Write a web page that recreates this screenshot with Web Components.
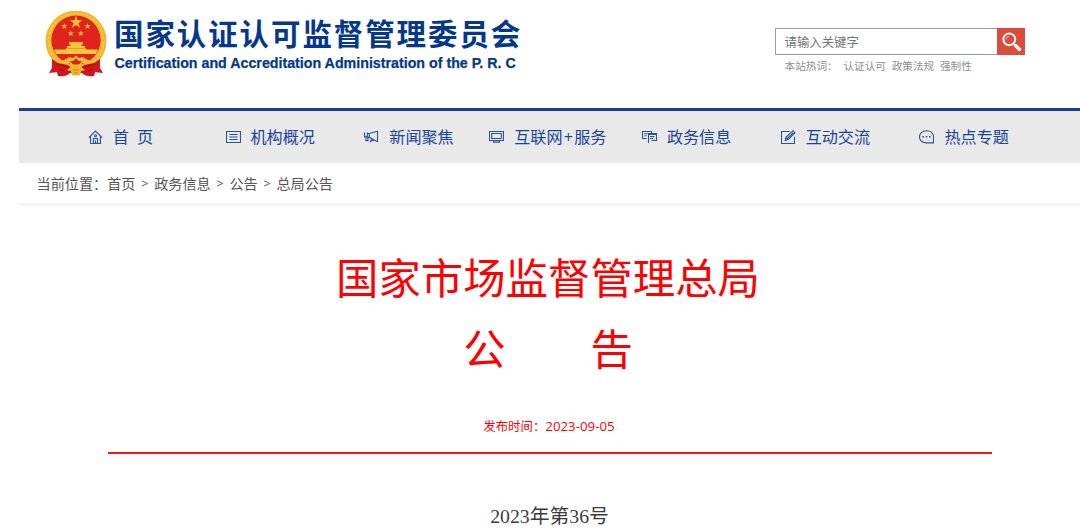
<!DOCTYPE html>
<html lang="zh-CN">
<head>
<meta charset="utf-8">
<title>国家认证认可监督管理委员会</title>
<style>
    body {
        margin: 0;
        background-color: #fff;
        overflow: hidden;
        font-family: "Open Sans", "Noto Sans CJK SC", sans-serif;
    }
</style>
</head>
<body>
<cnca-page></cnca-page>

<script>
const ICONS = {
    home: `<path d="M.8 7.6 7.5 1l6.7 6.6M2.6 6.4v7.1h9.8V6.4M5.5 13V8.5h4V13M7.5 10.5V13"/><circle cx="7.5" cy="5.7" r="1"/>`,
    list: `<path d="M.5 1.5h14v11H.5zM3.4 4.5h8.2M3.4 7h8.2M3.4 9.5h8.2"/>`,
    horn: `<path d="M.5 2.5v4.4h2.8V2.5M5.3 3v4.6M3.3 3.5h2l8.2-2.2v10.4L5.3 7.4h-2M2 7v3.6h2V7M8 9 6.5 11.5l3.6-1.4"/>`,
    screen: `<path d="M.5 1.5h14v9H.5zM2.7 3.5h9.6v5H2.7zM4.5 10.5v1.6h6v-1.6"/>`,
    boards: `<path d="M4.5 8.5h-4v-7h9v1.6M2.4 3.7h3M2.4 5.8h2M9.5 10.5h5v-6h-8v8M5.6 3.5h8.9v1.2M8 6.5h4.4M8 8.5h3M6.5 8.6V13"/>`,
    edit: `<path d="M8.6 1.5H.5v12h13V6.8M4.2 10.4l.7-3L12 .7l2 2-6.8 6.9zM4.9 7.4l2.1 2.2M6.5 8.4l5.8-5.8"/>`,
    chat: `<path d="M14.5 12.9H7.5C3.2 12.9.5 10.4.5 6.9S3.2.8 7.5.8s7 2.5 7 6.1z"/><path d="M3.4 6.7h1.6M6.7 6.7h1.6M10 6.7h1.6" stroke-width="1.6"/>`
};

class NationalEmblem extends HTMLElement {

    constructor() {
        super();
        this.shadowDOM = this.attachShadow({mode: "open"});
    }

    connectedCallback() {
        this.shadowDOM.innerHTML = `
        <style>
            :host { display: block; width: 62px; height: 67px; }
            svg { display: block; }
        </style>
        <svg width="62" height="67" viewBox="0 0 62 67">
            <path d="M8 50 Q15 53 22 53H40Q47 53 54 50L55 60 50 61 49 65 Q41 66 37 62H25Q21 66 13 65L12 61 7 60z" fill="#c9151b"/>
            <circle cx="31" cy="30" r="30.5" fill="#efb732"/>
            <circle cx="31" cy="30" r="27.5" fill="none" stroke="#f4c544" stroke-width="2" stroke-dasharray="3 1.2"/>
            <circle cx="31" cy="29.2" r="24.6" fill="#e0231c"/>
            <g fill="#f8c63b">
                <path id="star" d="M31 4.5 32.5 9.2H37.4L33.5 12 35 16.8 31 13.9 27 16.8 28.5 12 24.6 9.2H29.5z"/>
                <use href="#star" transform="translate(4.4 9.9) scale(.48)"/>
                <use href="#star" transform="translate(27.7 9.9) scale(.48)"/>
                <use href="#star" transform="translate(11 17) scale(.48)"/>
                <use href="#star" transform="translate(21 17) scale(.48)"/>
                <path d="M24 31h14v2.5h-1.5v1.5H40v2h1v6H21v-6h1v-2h3.5v-1.5H24z"/>
                <path d="M9 38.5h44l-2 4.5H11z"/>
            </g>
            <path d="M22 37.5h18" stroke="#e58a21" stroke-width=".7"/>
            <path d="M16 50Q22 48 24 46L28 47 31 44.5 34 47 38 46Q40 48 46 50L42 54 37 52 36 56H26L25 52 20 54z" fill="#f3bd37"/>
            <path d="M25 50h3l3-2.5 3 2.5h3l-3 3.5h-6z" fill="#d9251c"/>
            <path d="M7 48 13 52 23 54 28 58 22 60 19 65 13 61 4 62 7 57zM55 48 49 52 39 54 34 58 40 60 43 65 49 61 58 62 55 57z" fill="#d4171c"/>
            <path d="M13 53 24 57M14 58 19 60M49 53 38 57M48 58 43 60" stroke="#8f1014" stroke-width="1"/>
            <path d="M22 59 27 55h8l5 4-4 1-1 4.5H27L26 60z" fill="#f1b732"/>
            <path d="M28 59h6M29 62h4" stroke="#cf7a1c" stroke-width="1"/>
        </svg>
        `;
    }
}

class SearchBox extends HTMLElement {

    constructor() {
        super();
        this.shadowDOM = this.attachShadow({mode: "open"});
    }

    connectedCallback() {
        this.shadowDOM.innerHTML = `
        <style>
            :host { display: block; width: 250px; }
            .box { display: flex; height: 27px; }
            .field {
                flex: 1;
                box-sizing: border-box;
                border: 1px solid #999da2;
                border-right: 0;
                padding-left: 8.5px;
                font-size: 12.4px;
                line-height: 27px;
                color: #757575;
            }
            .button {
                width: 28px;
                background-color: #dc4b3b;
            }
            .hot {
                display: flex;
                gap: 5.7px;
                padding-left: 9.5px;
                margin-top: 2px;
                font-size: 10.65px;
                line-height: 18px;
                color: #8e8e8e;
                white-space: nowrap;
            }
        </style>
        <div class="box">
            <div class="field">${this.getAttribute("placeholder")}</div>
            <div class="button">
                <svg width="28" height="27" viewBox="0 0 28 27" fill="none" stroke="#fff" stroke-linecap="round">
                    <circle cx="12.3" cy="11.3" r="5.9" stroke-width="2"/>
                    <path d="M17 16l1.6 1.6" stroke-width="2"/>
                    <path d="M18.8 17.8l3.7 3.7" stroke-width="3.4"/>
                    <path d="M9 11a3.3 3.3 0 0 1 2.7-2.8" stroke="#f2b5ad" stroke-width="1"/>
                </svg>
            </div>
        </div>
        <div class="hot"><slot></slot></div>
        `;
    }
}

class NavItem extends HTMLElement {

    constructor() {
        super();
        this.shadowDOM = this.attachShadow({mode: "open"});
    }

    connectedCallback() {
        this.shadowDOM.innerHTML = `
        <style>
            :host {
                display: flex;
                justify-content: center;
                align-items: center;
                gap: 10px;
                box-sizing: border-box;
                width: 138.8px;
                font-size: 16.1px;
                color: #1a449b;
                white-space: pre;
            }
            svg { flex: none; }
            span { padding-bottom: 2px; }
        </style>
        <svg width="15" height="15" viewBox="0 0 15 15" fill="none" stroke="#2b509c" stroke-width="1.1">${ICONS[this.getAttribute("icon")]}</svg>
        <span><slot></slot></span>
        `;
    }
}

class CrumbTrail extends HTMLElement {

    constructor() {
        super();
        this.shadowDOM = this.attachShadow({mode: "open"});
    }

    connectedCallback() {
        this.shadowDOM.innerHTML = `
        <style>
            :host {
                display: flex;
                box-sizing: border-box;
                height: 43px;
                padding-left: 17.5px;
                border-bottom: 3px solid #f4f4f4;
                font-size: 14.15px;
                line-height: 41px;
                color: #555;
            }
            .sep {
                width: 18.7px;
                text-align: center;
                font-size: 12.5px;
            }
        </style>
        <span>当前位置：</span>
        ${this.getAttribute("path").split("/").map(name => `<span>${name}</span>`).join(`<span class="sep">&gt;</span>`)}
        `;
    }
}

class NoticeArticle extends HTMLElement {

    constructor() {
        super();
        this.shadowDOM = this.attachShadow({mode: "open"});
    }

    connectedCallback() {
        this.shadowDOM.innerHTML = `
        <style>
            :host {
                display: flex;
                flex-direction: column;
                padding: 37px 88px 0 89px;
                text-align: center;
            }
            .title {
                font-size: 42.4px;
                line-height: 70.5px;
                color: #f00;
                white-space: pre;
                padding-right: 4px;
            }
            .date {
                margin-top: 32px;
                height: 27px;
                font-size: 12.4px;
                line-height: 20px;
                color: #f00;
                border-bottom: 2px solid #fb1414;
                padding: 0 2px 9px 0;
            }
            .number {
                margin-top: 47px;
                padding-right: 1px;
                font: 19.8px/30px "Liberation Serif", "Noto Sans CJK SC", serif;
                color: #3c3c3c;
            }
        </style>
        <div class="title"><slot name="title"></slot></div>
        <div class="date"><slot name="date"></slot></div>
        <div class="number"><slot name="number"></slot></div>
        `;
    }
}

class CncaPage extends HTMLElement {

    constructor() {
        super();
        this.shadowDOM = this.attachShadow({mode: "open"});
    }

    connectedCallback() {
        this.shadowDOM.innerHTML = `
        <style>
            :host { display: block; padding-left: 19px; }
            header {
                display: flex;
                box-sizing: border-box;
                height: 108px;
                padding: 11px 55px 0 26px;
            }
            .names {
                flex: 1;
                padding-left: 7px;
                color: #05388a;
                font-weight: bold;
                white-space: nowrap;
            }
            .cn {
                font-family: "Noto Sans CJK SC", sans-serif;
                font-size: 29.5px;
                letter-spacing: 1.9px;
                line-height: 43px;
            }
            .en {
                padding-left: .5px;
                font-family: "Liberation Sans", sans-serif;
                font-size: 14.24px;
                line-height: 19px;
                -webkit-text-stroke: .25px #05388a;
            }
            search-box { margin-top: 17px; }
            nav {
                display: flex;
                box-sizing: border-box;
                height: 55px;
                padding-left: 43px;
                border-top: 3px solid #12409a;
                background-color: #e9e9e9;
            }
            .first { padding-right: 22px; }
            .plus { letter-spacing: 1.2px; margin-left: 1.2px; }
            .day { font-size: 13.3px; }
        </style>
        <header>
            <national-emblem></national-emblem>
            <div class="names">
                <div class="cn">国家认证认可监督管理委员会</div>
                <div class="en">Certification and Accreditation Administration of the P. R. C</div>
            </div>
            <search-box placeholder="请输入关键字">
                <span>本站热词：</span>
                <span>认证认可</span>
                <span>政策法规</span>
                <span>强制性</span>
            </search-box>
        </header>
        <nav>
            <nav-item class="first" icon="home">首&ensp;页</nav-item>
            <nav-item icon="list">机构概况</nav-item>
            <nav-item icon="horn">新闻聚焦</nav-item>
            <nav-item icon="screen">互联网<span class="plus">+</span>服务</nav-item>
            <nav-item icon="boards">政务信息</nav-item>
            <nav-item icon="edit">互动交流</nav-item>
            <nav-item icon="chat">热点专题</nav-item>
        </nav>
        <crumb-trail path="首页/政务信息/公告/总局公告"></crumb-trail>
        <notice-article>
            <span slot="title">国家市场监督管理总局<br>公　　告</span>
            <span slot="date">发布时间：<span class="day">2023-09-05</span></span>
            <span slot="number">2023年第36号</span>
        </notice-article>
        `;
    }
}

customElements.define("national-emblem", NationalEmblem);
customElements.define("search-box", SearchBox);
customElements.define("nav-item", NavItem);
customElements.define("crumb-trail", CrumbTrail);
customElements.define("notice-article", NoticeArticle);
customElements.define("cnca-page", CncaPage);
</script>
</body>
</html>
